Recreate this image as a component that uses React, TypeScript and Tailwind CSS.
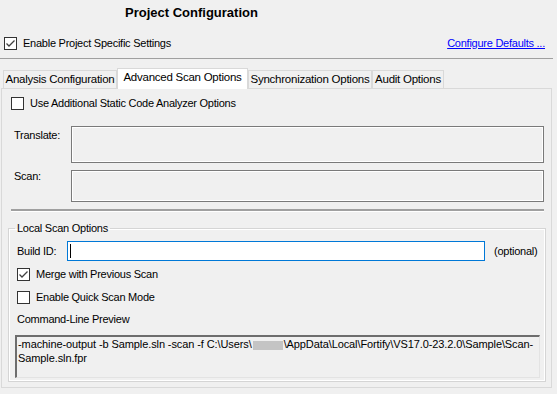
import React from 'react'

const font = "font-['Liberation_Sans',Arial,sans-serif]"

function Check({ checked }: { checked?: boolean }) {
    return (
        <span className="flex h-[13px] w-[13px] shrink-0 items-center justify-center border border-[#333333] bg-white">
            {checked && (
                <svg width="11" height="11" viewBox="0 0 11 11">
                    <polyline points="1.5,5.5 4,8 9.5,2.5" fill="none" stroke="#404040" strokeWidth="1.3" />
                </svg>
            )}
        </span>
    )
}

function CheckRow({ label, checked }: { label: string; checked?: boolean }) {
    return (
        <div className="flex h-[13px] items-center gap-[6px]">
            <Check checked={checked} />
            <span className="leading-[13px]">{label}</span>
        </div>
    )
}

// タブ
type Tab = { text: string; width: string; active?: boolean }

const tabs: Tab[] = [
    { text: 'Analysis Configuration', width: 'w-[114px]' },
    { text: 'Advanced Scan Options', width: 'w-[131px]', active: true },
    { text: 'Synchronization Options', width: 'w-[124px]' },
    { text: 'Audit Options', width: 'w-[72px]' },
]

export default function App() {
    return (
        <div className={`${font} h-[394px] w-[557px] overflow-hidden bg-[#f0f0f0] text-[11px] tracking-[-0.25px] text-black`}>
            {/* タイトル */}
            <div className="flex h-[26px] items-center pl-[125px] text-[13px] font-bold tracking-normal">
                Project Configuration
            </div>

            <div className="mt-[11px] mb-[8px] flex h-[13px] items-center justify-between pl-[4px] pr-[12px]">
                <CheckRow label="Enable Project Specific Settings" checked />
                <a href="#" className="leading-[13px] text-[#0000ff] underline">
                    Configure Defaults ...
                </a>
            </div>
            <div className="mr-[4px] h-px bg-[#a0a0a0]" />

            {/* タブ */}
            <div className="mt-[9px] flex h-[20px] items-end pl-[3px]">
                {tabs.map(tab =>
                    tab.active ? (
                        <div
                            key={tab.text}
                            className={`${tab.width} relative z-10 -mb-px flex h-[21px] items-center justify-center border border-b-0 border-[#d9d9d9] bg-white pb-[2px] text-[11.5px]`}>
                            {tab.text}
                        </div>
                    ) : (
                        <div
                            key={tab.text}
                            className={`${tab.width} flex h-[18px] items-center justify-center border border-b-0 border-[#d9d9d9] bg-[#f0f0f0] text-[11.5px]`}>
                            {tab.text}
                        </div>
                    ),
                )}
            </div>

            {/* タブパネル */}
            <div className="ml-[1px] h-[300px] w-[551px] border border-[#d9d9d9] bg-[#f0f0f0]">
                <div className="pt-[8px] pl-[9px]">
                    <CheckRow label="Use Additional Static Code Analyzer Options" />
                </div>

                <div className="mt-[16px] flex pl-[12px]">
                    <span className="w-[57px] pt-[3px] leading-[13px]">Translate:</span>
                    <div className="h-[37px] w-[473px] border border-[#7a7a7a] shadow-[inset_0_0_0_1px_#ffffff]" />
                </div>
                <div className="mt-[7px] flex pl-[12px]">
                    <span className="w-[57px] leading-[13px]">Scan:</span>
                    <div className="h-[32px] w-[473px] border border-[#7a7a7a] shadow-[inset_0_0_0_1px_#ffffff]" />
                </div>

                <div className="mt-[7px] ml-[9px] w-[533px] border-t-2 border-b border-t-[#a0a0a0] border-b-white" />

                {/* Local Scan Options */}
                <fieldset className="mt-[9px] ml-[6px] h-[161px] w-[538px] border border-[#d5d5d5] shadow-[inset_0_0_0_1px_#ffffff]">
                    <legend className="ml-[6px] px-[2px] leading-[14px]">Local Scan Options</legend>

                    <div className="mt-[6px] flex items-center pl-[8px]">
                        <span className="w-[50px] leading-[13px]">Build ID:</span>
                        <div className="flex h-[20px] w-[418px] items-center border border-[#0078d7] bg-white pl-[2px]">
                            <span className="h-[14px] w-px bg-black" />
                        </div>
                        <span className="ml-[9px] leading-[13px]">(optional)</span>
                    </div>

                    <div className="mt-[7px] pl-[8px]">
                        <CheckRow label="Merge with Previous Scan" checked />
                    </div>
                    <div className="mt-[10px] pl-[8px]">
                        <CheckRow label="Enable Quick Scan Mode" />
                    </div>

                    <div className="mt-[9px] pl-[8px] leading-[13px]">Command-Line Preview</div>

                    <div className="mt-[9px] ml-[6px] h-[43px] w-[525px] border-t-2 border-l-2 border-r border-b border-t-[#6d6d6d] border-l-[#6d6d6d] border-r-[#e3e3e3] border-b-[#e3e3e3] bg-[#f0f0f0] pl-[1px] leading-[14px] tracking-[-0.1px]">
                        -machine-output -b Sample.sln -scan -f C:\Users\
                        <span className="mx-[1px] inline-block h-[9px] w-[30px] bg-[#c4c4c4] align-middle" />
                        \AppData\Local\Fortify\VS17.0-23.2.0\Sample\Scan-
                        <br />
                        Sample.sln.fpr
                    </div>
                </fieldset>
            </div>
        </div>
    )
}
